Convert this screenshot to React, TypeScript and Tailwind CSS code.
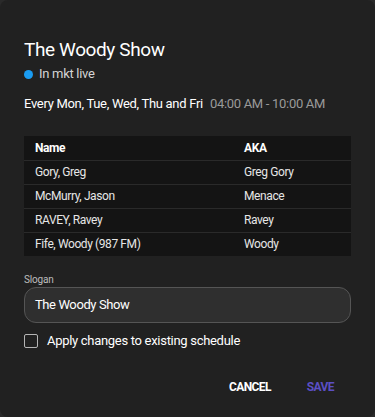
const rows = [
  { name: "Gory, Greg", aka: "Greg Gory" },
  { name: "McMurry, Jason", aka: "Menace" },
  { name: "RAVEY, Ravey", aka: "Ravey" },
  { name: "Fife, Woody (987 FM)", aka: "Woody" },
];

const App = () => {
  return (
    <div className="h-[417px] w-[375px] bg-[#2a2a2a] font-['Roboto',sans-serif]">
      <div className="flex h-full flex-col rounded-lg bg-[#212121] px-6 pt-[38px]">
        <h2 className="text-[19px] leading-[24px] tracking-[-0.4px] text-white">The Woody Show</h2>
        <div className="mt-[3px] flex items-center gap-[6px]">
          <span className="h-[9px] w-[9px] rounded-full bg-[#1a9cf2]" />
          <span className="text-[13px] leading-[18px] tracking-[-0.3px] text-[#d4d4d4]">In mkt live</span>
        </div>
        <div className="mt-[12px] flex items-center gap-[7px] whitespace-nowrap text-[13px] leading-[18px] tracking-[-0.3px]">
          <span className="text-white">Every Mon, Tue, Wed, Thu and Fri</span>
          <span className="text-[#9a9a9a]">04:00 AM - 10:00 AM</span>
        </div>

        <table className="mt-[23px] w-full border-collapse bg-[#141414] text-[12px] tracking-[-0.4px] text-[#e6e6e6]">
          <thead>
            <tr className="h-[24px] border-b border-[#2a2a2a]">
              <th className="pl-[11px] text-left font-bold text-white">Name</th>
              <th className="w-[107px] text-left font-bold text-white">AKA</th>
            </tr>
          </thead>
          <tbody>
            {rows.map((r, i) => (
              <tr
                key={r.name}
                className={i < rows.length - 1 ? "h-[24px] border-b border-[#2a2a2a]" : "h-[24px]"}
              >
                <td className="pl-[11px]">{r.name}</td>
                <td>{r.aka}</td>
              </tr>
            ))}
          </tbody>
        </table>

        <label className="mt-[17px] text-[10px] leading-[14px] tracking-[-0.2px] text-[#bdbdbd]">Slogan</label>
        <div className="flex h-[36px] items-center rounded-[12px] border border-[#555] bg-[#2f2f2f] px-[10px] text-[13px] tracking-[-0.4px] text-white">
          The Woody Show
        </div>

        <div className="mt-[8px] flex items-center gap-[9px]">
          <span className="h-[14px] w-[14px] rounded-[2px] border-[1.5px] border-[#b5b5b5]" />
          <span className="text-[13px] tracking-[-0.3px] text-white">Apply changes to existing schedule</span>
        </div>

        <div className="mt-[27px] flex justify-end gap-[36px] pr-[17px] text-[12px] font-bold tracking-[-0.6px]">
          <button className="text-white">CANCEL</button>
          <button className="text-[#5b4fc4]">SAVE</button>
        </div>
      </div>
    </div>
  );
};

export default App;
